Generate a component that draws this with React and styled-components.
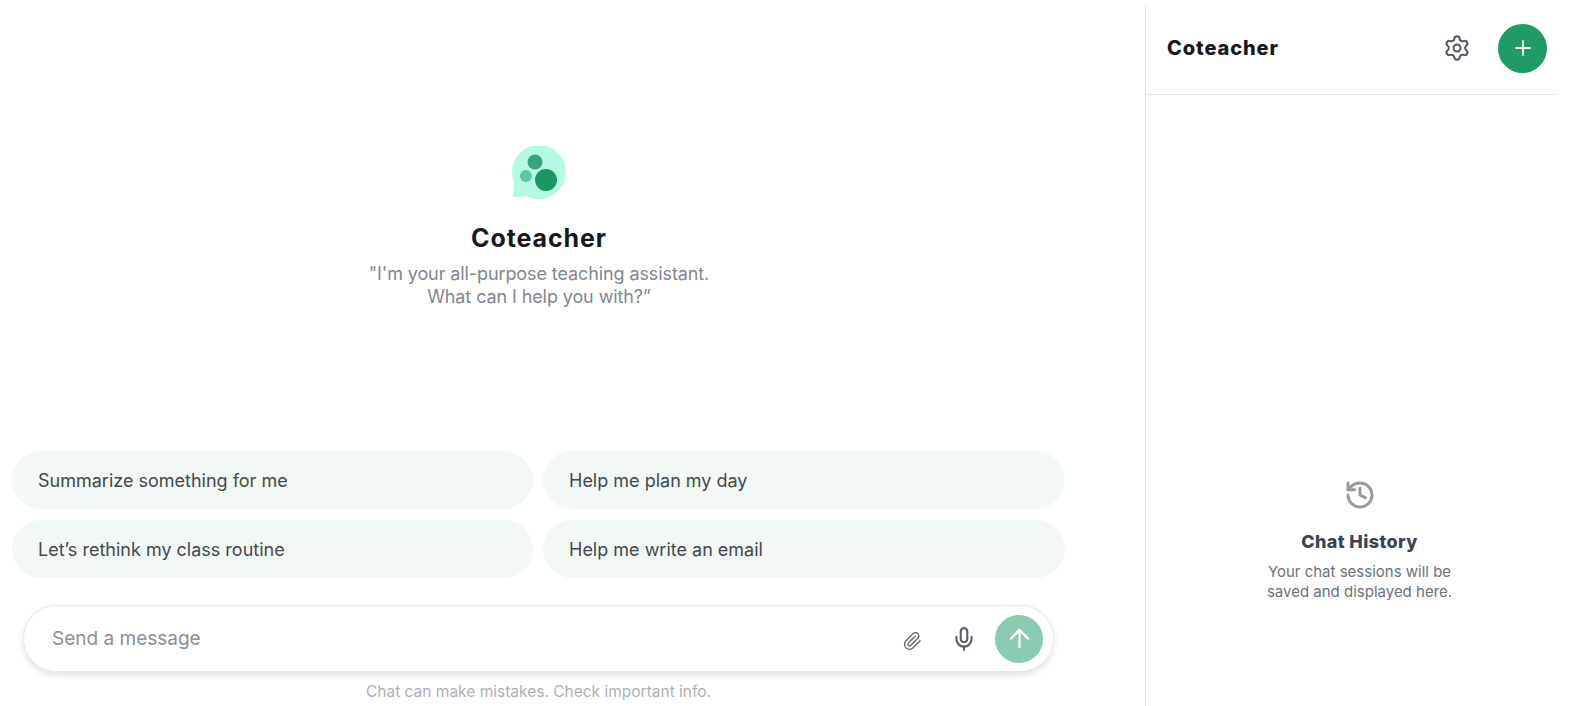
import styled, { createGlobalStyle } from "styled-components";
import { ArrowUp, History, Mic, Paperclip, Plus, Settings } from "lucide-react";

const GlobalStyle = createGlobalStyle`
  html, body {
    margin: 0;
    padding: 0;
    background: #ffffff;
  }
  body {
    font-family: "Inter", "Liberation Sans", sans-serif;
    overflow: hidden;
  }
`;

const Page = styled.div`
  display: flex;
  width: 1573px;
  height: 706px;
  overflow: hidden;
`;

const Main = styled.main`
  width: 1145px;
  flex-shrink: 0;
  display: flex;
  flex-direction: column;
`;

const Hero = styled.section`
  width: 1078px;
  height: 451px;
  padding-top: 146px;
  box-sizing: border-box;
  flex-shrink: 0;
  display: flex;
  flex-direction: column;
  align-items: center;
`;

const HeroTitle = styled.h1`
  margin: 23px 0 0;
  font-size: 25px;
  line-height: 32px;
  font-weight: 700;
  letter-spacing: 0.9px;
  color: #17191c;
`;

const HeroText = styled.p`
  margin: 8px 0 0;
  font-size: 18px;
  line-height: 23px;
  font-weight: 400;
  letter-spacing: -0.1px;
  text-align: center;
  color: #82868f;
`;

const Prompts = styled.div`
  display: grid;
  grid-template-columns: 521px 522px;
  grid-auto-rows: 58px;
  column-gap: 10px;
  row-gap: 11px;
  margin-left: 12px;
`;

const Prompt = styled.button`
  border: 0;
  border-radius: 29px;
  background: #f2f8f6;
  padding: 0 0 0 26px;
  text-align: left;
  font-family: inherit;
  font-size: 18px;
  color: #44484c;
`;

const Composer = styled.div`
  display: flex;
  align-items: center;
  box-sizing: border-box;
  width: 1031px;
  height: 67px;
  margin: 27px 0 0 23px;
  padding: 0 10px 0 28px;
  border: 1px solid #e8e9ea;
  border-radius: 34px;
  background: #fff;
  box-shadow: 0 3px 6px rgba(40, 44, 52, 0.14);
`;

const Placeholder = styled.span`
  flex: 1;
  font-size: 19px;
  color: #8b8f98;
`;

const ClipIcon = styled(Paperclip)`
  color: #5d626c;
  margin: 5px 29px 0 0;
`;

const MicIcon = styled(Mic)`
  color: #5d626c;
  margin-right: 18px;
`;

const SendButton = styled.button`
  width: 48px;
  height: 48px;
  padding: 0;
  border: 0;
  border-radius: 50%;
  background: #8accb0;
  color: #fff;
  display: flex;
  align-items: center;
  justify-content: center;
`;

const Disclaimer = styled.p`
  margin: 10px 0 0 23px;
  width: 1031px;
  font-size: 15.5px;
  line-height: 20px;
  text-align: center;
  color: #adb0b6;
`;

const Sidebar = styled.aside`
  flex: 1;
  margin-top: 5px;
  border-left: 1px solid #e4e5e8;
  display: flex;
  flex-direction: column;
`;

const SidebarHeader = styled.header`
  height: 90px;
  margin-right: 16px;
  box-sizing: border-box;
  padding: 0 10px 3px 21px;
  border-bottom: 1px solid #e6e6ee;
  display: flex;
  align-items: center;
`;

const SidebarTitle = styled.h2`
  flex: 1;
  margin: 0;
  font-size: 20px;
  font-weight: 800;
  letter-spacing: 0.9px;
  color: #17191c;
`;

const GearIcon = styled(Settings)`
  color: #4e5464;
  margin-right: 27px;
`;

const NewChat = styled.button`
  width: 49px;
  height: 49px;
  padding: 0;
  border: 0;
  border-radius: 50%;
  background: #1f9b66;
  color: #fff;
  display: flex;
  align-items: center;
  justify-content: center;
`;

const EmptyState = styled.div`
  padding-top: 384px;
  display: flex;
  flex-direction: column;
  align-items: center;
`;

const HistoryIcon = styled(History)`
  color: #9a9a9a;
`;

const EmptyTitle = styled.h3`
  margin: 19px 0 0;
  font-size: 18px;
  line-height: 24px;
  font-weight: 800;
  letter-spacing: 0.4px;
  color: #3b4352;
`;

const EmptyText = styled.p`
  margin: 8px 0 0;
  font-size: 15px;
  line-height: 20px;
  text-align: center;
  color: #6d717a;
`;

const CoteacherLogo = () => (
  <svg width="56" height="53" viewBox="0 0 56 53" aria-hidden="true">
    <circle cx="28" cy="26" r="27" fill="#b5f9e5" />
    <path d="M3 36 L2 49 Q2 51 4 51 L17 50 Z" fill="#b5f9e5" />
    <circle cx="24" cy="16" r="7.500" fill="#34a67b" />
    <circle cx="15" cy="30" r="6" fill="#62c5a0" />
    <circle cx="35" cy="34" r="11" fill="#1a9563" />
  </svg>
);

const prompts = [
  "Summarize something for me",
  "Help me plan my day",
  "Let’s rethink my class routine",
  "Help me write an email",
];

const App = () => {
  return (
    <Page>
      <GlobalStyle />
      <Main>
        <Hero>
          <CoteacherLogo />
          <HeroTitle>Coteacher</HeroTitle>
          <HeroText>
            "I'm your all-purpose teaching assistant.
            <br />
            What can I help you with?”
          </HeroText>
        </Hero>
        <Prompts>
          {prompts.map((text) => (
            <Prompt key={text}>{text}</Prompt>
          ))}
        </Prompts>
        <Composer>
          <Placeholder>Send a message</Placeholder>
          <ClipIcon size={20} strokeWidth={1.6} />
          <MicIcon size={26} strokeWidth={2} />
          <SendButton aria-label="Send">
            <ArrowUp size={29} strokeWidth={2} />
          </SendButton>
        </Composer>
        <Disclaimer>Chat can make mistakes. Check important info.</Disclaimer>
      </Main>
      <Sidebar>
        <SidebarHeader>
          <SidebarTitle>Coteacher</SidebarTitle>
          <GearIcon size={28} strokeWidth={1.7} />
          <NewChat aria-label="New chat">
            <Plus size={24} strokeWidth={1.8} />
          </NewChat>
        </SidebarHeader>
        <EmptyState>
          <HistoryIcon size={32} strokeWidth={2.2} />
          <EmptyTitle>Chat History</EmptyTitle>
          <EmptyText>
            Your chat sessions will be
            <br />
            saved and displayed here.
          </EmptyText>
        </EmptyState>
      </Sidebar>
    </Page>
  );
};

export default App;
